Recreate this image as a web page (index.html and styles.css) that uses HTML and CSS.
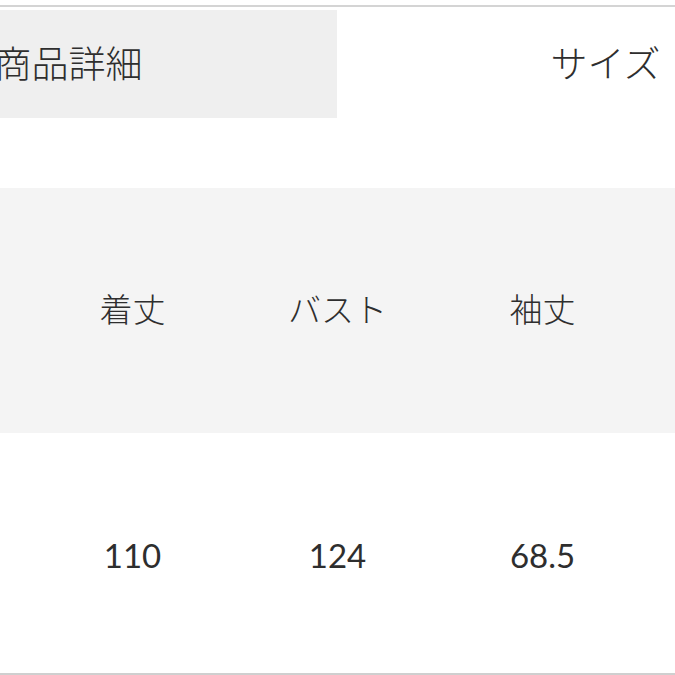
FILE: index.html
```html
<!DOCTYPE html>
<html lang="ja">
<head>
<meta charset="utf-8">
<link rel="stylesheet" href="styles.css">
</head>
<body>
<div class="page">
  <div class="tabs">
    <div class="tab tab-active">商品詳細</div>
    <div class="tab">サイズ</div>
  </div>
  <div class="size-table">
    <div class="row row-head">
      <div class="cell spacer"></div>
      <div class="cell">着丈</div>
      <div class="cell">バスト</div>
      <div class="cell">袖丈</div>
      <div class="cell spacer"></div>
    </div>
    <div class="row row-data">
      <div class="cell spacer"></div>
      <div class="cell num">110</div>
      <div class="cell num">124</div>
      <div class="cell num">68.5</div>
      <div class="cell spacer"></div>
    </div>
  </div>
</div>
</body>
</html>
```

FILE: styles.css
```css
html, body {
  margin: 0;
  padding: 0;
  background: #ffffff;
}
body {
  width: 675px;
  height: 675px;
  overflow: hidden;
  font-family: "Lato", "Noto Sans CJK JP", sans-serif;
  color: #333333;
}
.page {
  margin-top: 5px;
  border-top: 2px solid #d4d4d4;
}
.tabs {
  display: flex;
  margin-top: 3px;
  margin-left: -200px;
}
.tab {
  flex: 0 0 537px;
  height: 108px;
  padding-bottom: 4px;
  box-sizing: border-box;
  display: flex;
  align-items: center;
  justify-content: center;
  font-family: "Noto Sans CJK JP", sans-serif;
  font-weight: 300;
  font-size: 37px;
  color: #2e2e2e;
}
.tab-active {
  background: #efefef;
}
.size-table {
  margin-top: 70px;
}
.row {
  display: grid;
  grid-template-columns: 30px repeat(3, 205px) 1fr;
}
.row-head {
  height: 245px;
  background: #f4f4f4;
}
.row-data {
  height: 240px;
  border-bottom: 2px solid #cfcfcf;
}
.cell {
  display: flex;
  align-items: center;
  justify-content: center;
  font-family: "Noto Sans CJK JP", sans-serif;
  font-weight: 300;
  font-size: 33px;
  color: #2e2e2e;
}
.row-head .cell {
  padding-bottom: 6px;
}
.num {
  font-family: "Lato", sans-serif;
  font-weight: 400;
  font-size: 33px;
  padding-top: 4px;
}
```
